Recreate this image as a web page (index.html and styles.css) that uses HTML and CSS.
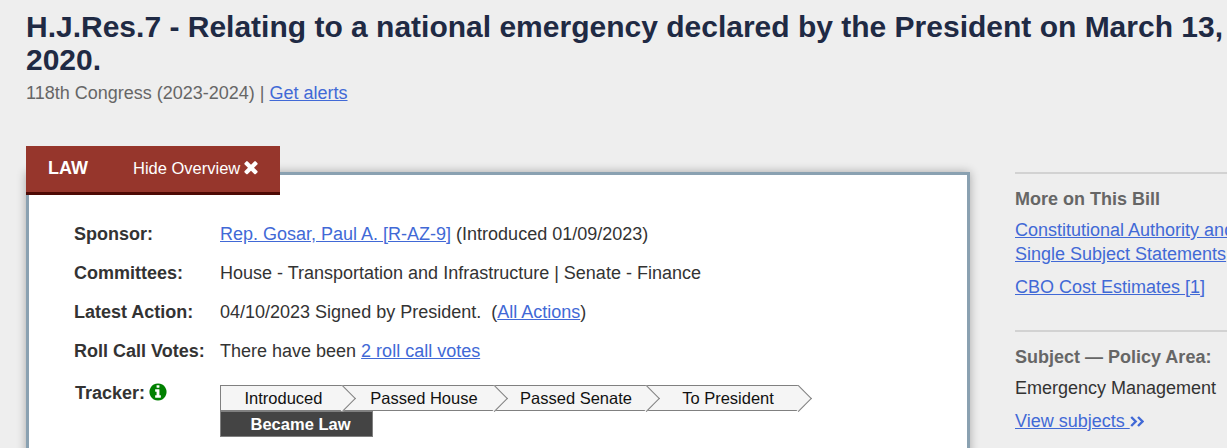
FILE: index.html
```html
<!DOCTYPE html>
<html lang="en">
<head>
<meta charset="utf-8">
<title>H.J.Res.7</title>
<link rel="stylesheet" href="styles.css">
</head>
<body>
<header class="bill-header">
  <h1 class="bill-title">H.J.Res.7 - Relating to a national emergency declared by the President on March 13, 2020.</h1>
  <p class="bill-sub">118th Congress (2023-2024) | <a href="#">Get alerts</a></p>
</header>
<main class="layout">
  <section class="overview">
    <div class="tab">
      <span class="tab-status">LAW</span>
      <span class="tab-toggle">Hide Overview<svg class="icon-times" viewBox="0 0 1408 1792"><path d="M1298 1322q0 40-28 68l-136 136q-28 28-68 28t-68-28l-294-294-294 294q-28 28-68 28t-68-28l-136-136q-28-28-28-68t28-68l294-294-294-294q-28-28-28-68t28-68l136-136q28-28 68-28t68 28l294 294 294-294q28-28 68-28t68 28l136 136q28 28 28 68t-28 68l-294 294 294 294q28 28 28 68z"/></svg></span>
    </div>
    <div class="card">
      <div class="row"><div class="label">Sponsor:</div><div class="value"><a href="#">Rep. Gosar, Paul A. [R-AZ-9]</a> (Introduced 01/09/2023)</div></div>
      <div class="row"><div class="label">Committees:</div><div class="value">House - Transportation and Infrastructure | Senate - Finance</div></div>
      <div class="row"><div class="label">Latest Action:</div><div class="value">04/10/2023 Signed by President.&nbsp; (<a href="#">All Actions</a>)</div></div>
      <div class="row"><div class="label">Roll Call Votes:</div><div class="value">There have been <a href="#">2 roll call votes</a></div></div>
      <div class="row tracker-row">
        <div class="label tracker-label">Tracker:
          <svg class="icon-info" viewBox="0 0 1536 1792"><path d="M1024 1376v-160q0-14-9-23t-23-9h-96v-512q0-14-9-23t-23-9h-320q-14 0-23 9t-9 23v160q0 14 9 23t23 9h96v320h-96q-14 0-23 9t-9 23v160q0 14 9 23t23 9h448q14 0 23-9t9-23zm-128-896v-160q0-14-9-23t-23-9h-192q-14 0-23 9t-9 23v160q0 14 9 23t23 9h192q14 0 23-9t9-23zm640 416q0 209-103 385.5t-279.5 279.5-385.5 103-385.5-103-279.5-279.5-103-385.5 103-385.5 279.5-279.5 385.5-103 385.5 103 279.5 279.5 103 385.5z"/></svg>
        </div>
        <div class="tracker">
          <ol class="steps">
            <li class="step step-first">Introduced</li>
            <li class="step">Passed House</li>
            <li class="step">Passed Senate</li>
            <li class="step">To President</li>
          </ol>
          <div class="step-current">Became Law</div>
        </div>
      </div>
    </div>
  </section>
  <aside class="sidebar">
    <section class="side-block">
      <h2 class="side-title">More on This Bill</h2>
      <p class="side-links"><a href="#">Constitutional Authority and Single Subject Statements</a></p>
      <p class="side-links side-links-last"><a href="#">CBO Cost Estimates [1]</a></p>
    </section>
    <section class="side-block side-block-second">
      <h2 class="side-title">Subject — Policy Area:</h2>
      <p class="side-text">Emergency Management</p>
      <p class="side-view"><a href="#">View subjects </a><svg class="icon-double" viewBox="0 0 14 11"><path d="M1.2 1 L5.7 5.5 L1.2 10 M8 1 L12.5 5.5 L8 10"/></svg></p>
    </section>
  </aside>
</main>
</body>
</html>
```

FILE: styles.css
```css
* { box-sizing: border-box; }
html, body { margin: 0; height: 448px; overflow: hidden; }
body {
  background: #eeeeee;
  color: #333333;
  font-family: "Liberation Sans", Arial, sans-serif;
  font-size: 18px;
  width: 1227px;
}
a { color: #4169d6; text-decoration: underline; }

.bill-header { padding: 10px 0 0 26px; }
.bill-title {
  margin: 0;
  width: 1200px;
  font-size: 30px;
  line-height: 33px;
  font-weight: bold;
  color: #1f2a44;
}
.bill-sub {
  margin: 0;
  padding-top: 5px;
  font-size: 18px;
  line-height: 24px;
  color: #666666;
}

.layout {
  display: flex;
  align-items: flex-start;
  padding: 41px 0 0 26px;
}
.overview { width: 944px; flex: none; position: relative; padding-top: 26px; }

.tab {
  position: absolute;
  top: 0;
  left: 0;
  z-index: 2;
  width: 254px;
  height: 49px;
  display: flex;
  align-items: flex-start;
  padding-top: 11px;
  background: #96362c;
  border-bottom: 3px solid #4d0a05;
  color: #ffffff;
  line-height: 22px;
}
.tab-status { font-weight: bold; margin-left: 22px; font-size: 18px; }
.tab-toggle { margin-left: 45px; font-size: 16.5px; white-space: nowrap; }
.icon-times { width: 16px; height: 20px; fill: #ffffff; vertical-align: -3px; margin-left: 3px; }

.card {
  background: #ffffff;
  border: 3px solid #8aa1b1;
  box-shadow: 0 0 9px rgba(0, 0, 0, 0.3);
  padding: 47px 0 60px 45px;
  height: 400px;
}
.row { display: flex; height: 39px; line-height: 24px; }
.label { width: 146px; flex: none; font-weight: bold; color: #333333; }
.value { color: #333333; }
.tracker-row { height: auto; }
.tracker-label { position: relative; left: 1px; top: 3px; }
.icon-info { width: 18px; height: 20px; fill: #008000; vertical-align: -3px; margin-left: -1px; }

.tracker { padding-top: 7px; font-size: 16.5px; }
.steps { list-style: none; margin: 0; padding: 0; display: flex; color: #111111; }
.step {
  position: relative;
  width: 152px;
  height: 26px;
  line-height: 24px;
  padding-left: 10px;
  text-align: center;
  background: #f5f5f5;
  border-top: 1px solid #808080;
  border-bottom: 1px solid #808080;
}
.step::after {
  content: "";
  position: absolute;
  z-index: 1;
  top: 3px;
  right: -9px;
  width: 18px;
  height: 18px;
  background: #f5f5f5;
  border-top: 1px solid #808080;
  border-right: 1px solid #808080;
  transform: rotate(45deg);
}
.step-first { width: 123px; padding-left: 3px; border-left: 1px solid #808080; }
.step-current {
  width: 153px;
  height: 26px;
  line-height: 24px;
  padding-left: 8px;
  text-align: center;
  background: #444444;
  border: 1px solid #808080;
  color: #ffffff;
  font-weight: bold;
}

.sidebar { width: 240px; flex: none; margin: 26px 0 0 45px; }
.side-block { border-top: 2px solid #d2d2d2; padding-top: 13px; }
.side-block-second { margin-top: 31px; }
.side-title { margin: 0; font-size: 18px; line-height: 24px; font-weight: bold; color: #666666; }
.side-links { margin: 7px 0 0; line-height: 24px; width: 225px; }
.side-links-last { margin-top: 9px; }
.side-text { margin: 7px 0 0; line-height: 24px; }
.side-view { margin: 9px 0 0; line-height: 24px; }
.icon-double { width: 14px; height: 11px; fill: none; stroke: #4169d6; stroke-width: 2.4; }
```
